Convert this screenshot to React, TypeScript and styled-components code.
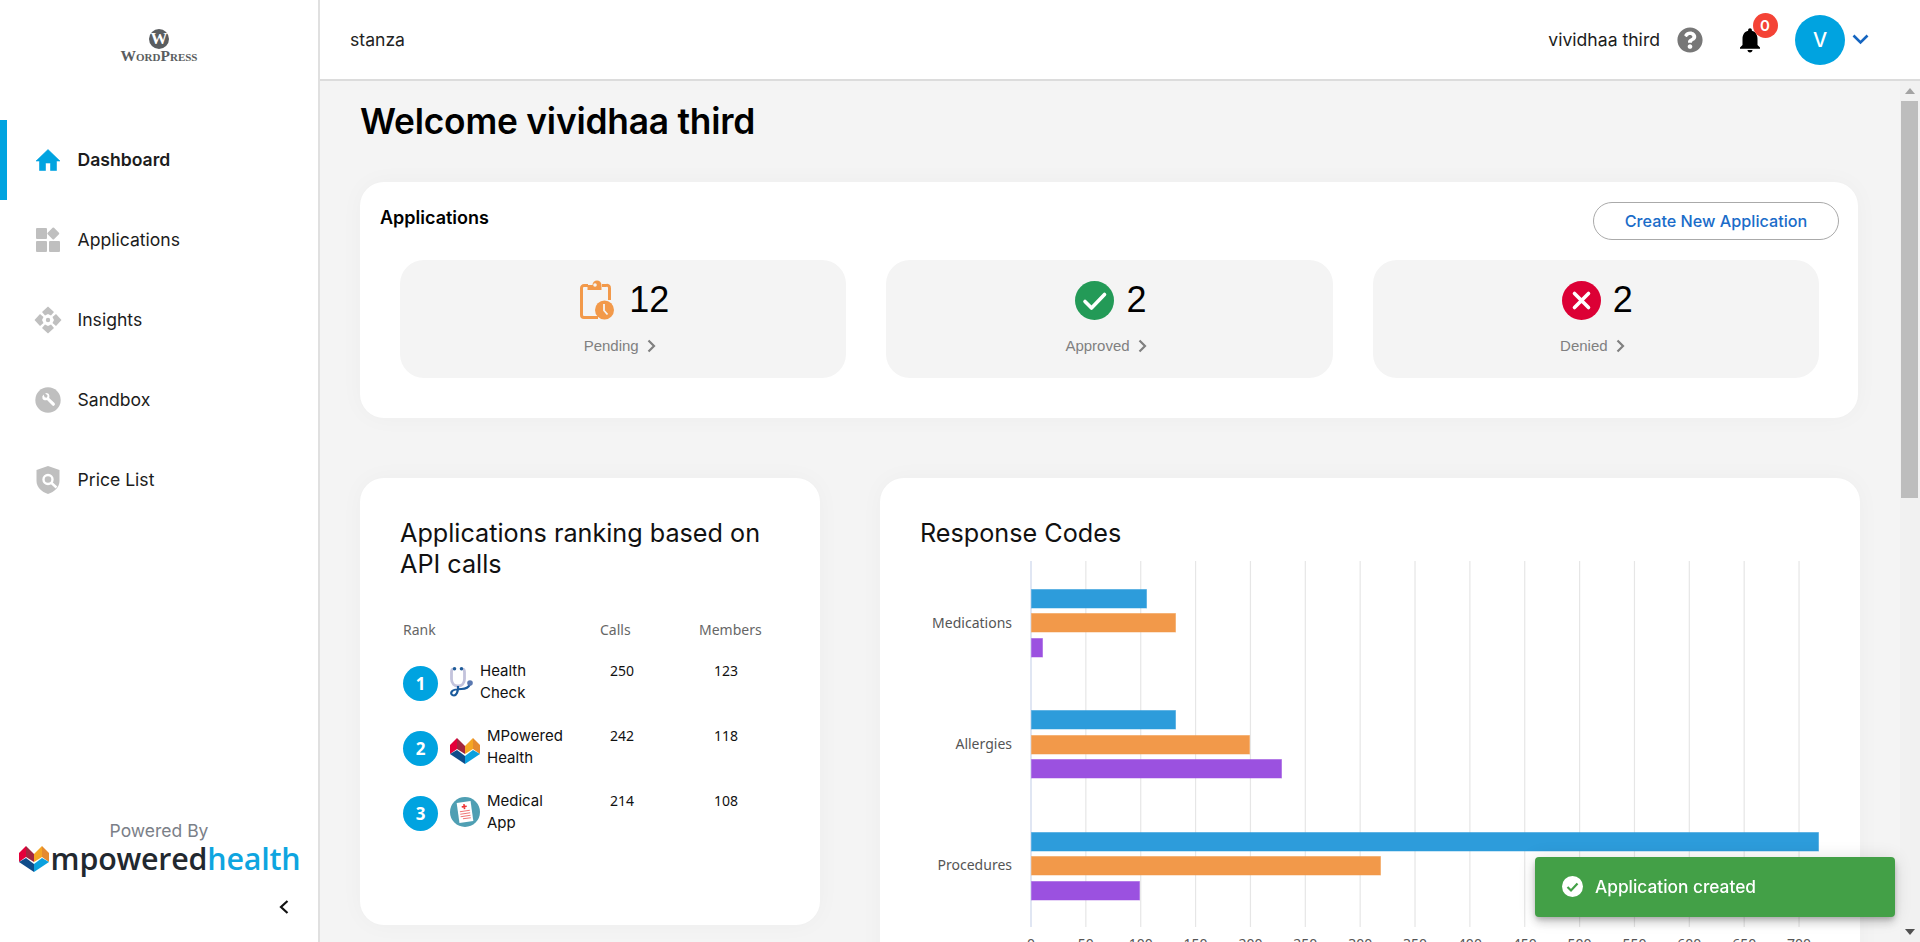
import React from "react";
import styled, { createGlobalStyle } from "styled-components";
import { FaQuestionCircle } from "react-icons/fa";

const Global = createGlobalStyle`
  html, body { margin: 0; padding: 0; height: 100%; overflow: hidden; background: #fff; }
  body { font-family: Inter, "Liberation Sans", sans-serif; color: #1a1a1a; }
  * { box-sizing: border-box; }
`;

const Shell = styled.div`display: flex; height: 100vh; width: 100vw;`;
const Sidebar = styled.aside`
  width: 320px; flex: none; height: 100%; display: flex; flex-direction: column;
  border-right: 2px solid #e0e0e0; background: #fff;
`;
const LogoBox = styled.div`
  height: 120px; display: flex; flex-direction: column; align-items: center; padding-top: 29px; color: #555;
`;
const WpMark = styled.div`
  width: 20px; height: 20px; border-radius: 50%; background: #5a5d60; color: #fff; display: flex;
  align-items: center; justify-content: center; font: bold 17px "Liberation Serif", serif;
`;
const WpWord = styled.div`
  font: bold 15.5px/14px "Liberation Serif", serif; font-variant: small-caps; color: #5a5d60;
`;
const Nav = styled.nav`display: flex; flex-direction: column; flex: 1;`;
const NavItem = styled.div<{ $active?: boolean }>`
  height: 80px; display: flex; align-items: center; gap: 17.5px; padding-left: 36px;
  font-size: 17.6px; font-weight: ${(p) => (p.$active ? 600 : 400)}; color: #1c1c1c;
  box-shadow: ${(p) => (p.$active ? "inset 7px 0 0 #00a3e0" : "none")};
`;
const NavLabel = styled.span`margin-bottom: 2px;`;
const NavIcon = styled.svg`width: 24px; height: 28px; flex: none; overflow: visible;`;
const Foot = styled.div`display: flex; flex-direction: column; align-items: center; padding-bottom: 26px;`;
const Powered = styled.div`font-size: 17.5px; line-height: 20px; color: #7b8088; margin: 0 0 3px; position: relative; top: 1px;`;
const Brand = styled.div`display: flex; align-items: center; height: 32px; margin-left: 1px; gap: 2px;`;
const BrandWord = styled.span<{ $c: string }>`
  font: 600 30.4px/30px "Open Sans", sans-serif; color: ${(p) => p.$c}; letter-spacing: -0.2px;
`;
const Collapse = styled.svg`width: 14px; height: 18px; margin: 23px 0 0 250px;`;

const Right = styled.div`flex: 1; min-width: 0; display: flex; flex-direction: column;`;
const Header = styled.header`
  height: 81px; flex: none; display: flex; align-items: center; padding: 0 51px 0 30px; background: #fff;
  border-bottom: 2px solid #dcdcdc; font-size: 17.6px;
`;
const Tenant = styled.div`flex: 1; color: #222;`;
const UserName = styled.div`color: #1c1c1c; margin-right: 17px;`;
const HelpWrap = styled.div`display: flex; color: #777; margin-right: 32px;`;
const BellWrap = styled.div`position: relative; width: 30px; height: 30px; margin-right: 30px;`;
const Badge = styled.span`
  position: absolute; left: 17.5px; top: -12px; width: 25px; height: 25px; border-radius: 50%; background: #f44336; color: #fff;
  font-size: 15px; font-weight: 600; display: flex; align-items: center; justify-content: center;
`;
const Avatar = styled.div`
  width: 50px; height: 50px; border-radius: 50%; background: #00a3e0; color: #fff; font-size: 20px; font-weight: 500;
  display: flex; align-items: center; justify-content: center; margin-right: 7px;
`;

const Body = styled.div`flex: 1; min-height: 0; display: flex;`;
const Main = styled.main`flex: 1; min-width: 0; overflow: hidden; background: #f4f4f4;`;
const ScrollBar = styled.div`width: 20px; flex: none; background: #f1f1f1; display: flex; flex-direction: column;`;
const ScrollArrow = styled.div`height: 20px; flex: none; display: flex; align-items: center; justify-content: center;`;
const ScrollThumb = styled.div`width: 17px; height: 397px; margin-left: 1px; background: #bdbdbd;`;
const ScrollRest = styled.div`flex: 1;`;

const Content = styled.div`padding: 19px 42px 60px 40px;`;
const Welcome = styled.h1`margin: 0 0 38px; font-size: 35.3px; line-height: 44px; font-weight: 600; color: #000; letter-spacing: -0.2px;`;
const Panel = styled.section`
  background: #fff; border-radius: 24px; box-shadow: 0 0 24px rgba(0,0,0,.03);
`;
const AppsPanel = styled(Panel)`padding: 20px 19px 40px 20px; margin-bottom: 60px;`;
const AppsHead = styled.div`display: flex; justify-content: space-between; align-items: flex-start; height: 38px; margin-bottom: 20px;`;
const AppsTitle = styled.h2`margin: 0; font-size: 18px; line-height: 32px; font-weight: 600; color: #000;`;
const CreateBtn = styled.button`
  width: 246px; height: 38px; border-radius: 19px; border: 1px solid #aaa; background: #fff; color: #1a6cc9;
  font: 500 16.2px Inter, sans-serif; padding: 0;
`;
const Stats = styled.div`display: grid; grid-template-columns: repeat(3, 1fr); gap: 40px; padding: 0 20px;`;
const Stat = styled.div`
  height: 118px; border-radius: 24px; background: #f4f4f4; display: flex; flex-direction: column; align-items: center; padding-top: 20px;
`;
const StatTop = styled.div<{ $gap: number }>`display: flex; align-items: center; gap: ${(p) => p.$gap}px; height: 40px; padding-left: 3px;`;
const StatNum = styled.span`font: 36px/42px "Liberation Sans", sans-serif; color: #000;`;
const StatLabel = styled.div`
  margin-top: 16px; padding-right: 7px; display: flex; align-items: center; gap: 8px; font: 15px/20px "Liberation Sans", sans-serif; color: #808080;
`;
const Row2 = styled.div`display: grid; grid-template-columns: 460px 1fr; gap: 60px; align-items: start;`;
const RankPanel = styled(Panel)`padding: 40px 30px 70px 40px;`;
const CardTitle = styled.h3`margin: 0; font-size: 25.2px; line-height: 31px; font-weight: 400; color: #111;`;
const RankGrid = styled.div`
  display: grid; grid-template-columns: 197px 99px 1fr; padding-left: 3px; margin-top: 40px;
  font-family: "Noto Sans", sans-serif; font-size: 14px;
`;
const HeadCell = styled.div`height: 40px; line-height: 20px; color: #666;`;
const RankCell = styled.div`height: 65px; display: flex; align-items: flex-start;`;
const RankNum = styled.div`
  width: 35px; height: 35px; border-radius: 50%; background: #00a3e0; color: #fff; font-weight: 700; font-size: 17px; flex: none;
  display: flex; align-items: center; justify-content: center; margin-top: 6px; margin-right: 12px;
`;
const AppIcon = styled.svg`flex: none; margin-top: 7px; margin-right: 7px;`;
const HeartBox = styled.div`flex: none; width: 30px; height: 26px; margin-top: 13px; margin-right: 7px;`;
const AppName = styled.div`width: 80px; font: 15px/22px Inter, sans-serif; color: #111;`;
const NumCell = styled.div<{ $pad: number }>`height: 65px; line-height: 22px; color: #111; padding-left: ${(p) => p.$pad}px;`;
const ChartPanel = styled(Panel)`padding: 40px 40px 120px; min-height: 900px;`;
const Chart = styled.svg`display: block; width: 900px; height: 420px; margin-top: 1px; overflow: visible; font-family: "Noto Sans", sans-serif;`;
const Toast = styled.div`
  position: fixed; left: 1535px; top: 857px; width: 360px; height: 60px; border-radius: 4px; background: #43a047; color: #fff;
  display: flex; align-items: center; gap: 12px; padding: 0 0 1px 27px; font-size: 17.3px; font-weight: 500;
  box-shadow: 0 3px 5px -1px rgba(0,0,0,.2), 0 6px 10px 0 rgba(0,0,0,.14), 0 1px 18px 0 rgba(0,0,0,.12);
`;

const Heart = ({ w = 30 }: { w?: number }) => (
  <svg width={w} height={(w * 26) / 30} viewBox="0 0 30 26" style={{ flex: "none", display: "block" }}>
    <polygon points="0,7 7,0 7,11 0,16" fill="#e4003a" />
    <polygon points="7,0 15,8 15,16 7,11" fill="#a3263f" />
    <polygon points="15,8 23,0 23,11 15,16" fill="#f5a623" />
    <polygon points="23,0 30,7 30,16 23,11" fill="#e58a2f" />
    <polygon points="0,16 7,12 15,18 15,26" fill="#0f4c8a" />
    <polygon points="30,16 23,12 15,18 15,26" fill="#0aa0de" />
  </svg>
);

const Chev = ({ c = "#808080" }: { c?: string }) => (
  <svg width="9" height="14" viewBox="0 0 9 14"><path d="M1.5 1.5L7 7l-5.5 5.5" fill="none" stroke={c} strokeWidth="2.2" /></svg>
);

const BLUE = "#2d9cdb", ORANGE = "#f2994a", PURPLE = "#9b51e0";
const cats = [
  { name: "Medications", ly: 628, bars: [[589, 1147, BLUE], [613, 1176, ORANGE], [638, 1043, PURPLE]] },
  { name: "Allergies", ly: 749, bars: [[710, 1176, BLUE], [735, 1250, ORANGE], [759, 1282, PURPLE]] },
  { name: "Procedures", ly: 870, bars: [[832, 1819, BLUE], [856, 1381, ORANGE], [881, 1140, PURPLE]] },
] as { name: string; ly: number; bars: [number, number, string][] }[];
const ticks = Array.from({ length: 15 }, (_, i) => i);
const tx = (i: number) => 1031 + i * 54.86;

const rows = [
  { n: 1, name: "Health Check", calls: 250, members: 123, icon: "steth" },
  { n: 2, name: "MPowered Health", calls: 242, members: 118, icon: "heart" },
  { n: 3, name: "Medical App", calls: 214, members: 108, icon: "med" },
];

const RowIcon = ({ kind }: { kind: string }) => {
  if (kind === "steth")
    return (
      <AppIcon width="23" height="30" viewBox="0 0 23 30" fill="none">
        <path d="M3 2C1.800 2.400 1.500 3.200 1.500 5v7c0 4.500 3 7 6.500 7s6.500-2.500 6.500-7V5c0-1.800-.3-2.600-1.500-3" stroke="#c3c3dc" strokeWidth="2.800" />
        <circle cx="4.500" cy="1.800" r="1.800" fill="#1f5c99" /><circle cx="11.500" cy="1.800" r="1.800" fill="#1f5c99" />
        <path d="M8 19v2c0 3.500-1.500 7.500-4 7.500S.8 26.500 1.500 25c1-2.200 5-3 10-3 4.500 0 7-1.200 8.500-5" stroke="#1a5a9c" strokeWidth="2.200" />
        <circle cx="20" cy="16" r="2.800" fill="#5a78b0" />
      </AppIcon>
    );
  if (kind === "heart")
    return <HeartBox><Heart /></HeartBox>;
  return (
    <AppIcon width="30" height="30" viewBox="0 0 30 30">
      <circle cx="15" cy="15" r="15" fill="#4f9fb3" />
      <g transform="rotate(-8 15 15)">
        <rect x="8" y="5" width="14" height="20" fill="#fff" />
        <path d="M15 7v5M12.500 9.500h5" stroke="#e33" strokeWidth="1.600" />
        <path d="M10 14h10M10 16.500h10M10 19h10M12 21.500h8" stroke="#ee7777" strokeWidth="1" />
      </g>
    </AppIcon>
  );
};

export default function App() {
  return (
    <Shell>
      <Global />
      <Sidebar>
        <LogoBox>
          <WpMark>W</WpMark>
          <WpWord>WordPress</WpWord>
        </LogoBox>
        <Nav>
          <NavItem $active>
            <NavIcon viewBox="0 0 24 28"><path d="M12 3.500L0 15h3.500v9.500H9.500V17h5v7.500h6V15H24z" fill="#00a3e0" strokeLinejoin="round" stroke="#00a3e0" strokeWidth="0.600" /></NavIcon>
            <NavLabel>Dashboard</NavLabel>
          </NavItem>
          <NavItem>
            <NavIcon viewBox="0 0 24 28" fill="#bfbfbf">
              <rect x="0" y="2" width="11" height="11" rx="1" />
              <rect x="12.800" y="3" width="9" height="9" rx="1" transform="rotate(45 17.300 7.500)" />
              <rect x="0" y="15" width="11" height="11" rx="1" />
              <rect x="13" y="15" width="11" height="11" rx="1" />
            </NavIcon>
            <NavLabel>Applications</NavLabel>
          </NavItem>
          <NavItem>
            <NavIcon viewBox="0 0 24 28" fill="#bfbfbf">
              <path d="M12 .5l6 5.500-3 3.500-3-1.500-3 1.500-3-3.500zM12 27.500l6-5.500-3-3.500-3 1.500-3-1.500-3 3.500zM-1.500 14L4 8l3.500 3-1.500 3 1.500 3L4 20zM25.500 14L20 8l-3.500 3 1.500 3-1.500 3L20 20z" />
              <circle cx="12" cy="14" r="2.200" />
            </NavIcon>
            <NavLabel>Insights</NavLabel>
          </NavItem>
          <NavItem>
            <NavIcon viewBox="0 0 24 28">
              <circle cx="12" cy="14" r="12.700" fill="#bfbfbf" />
              <path d="M7.500 8.500a4 4 0 0 0-1 4.200l0 0c1 1.600 3 2 4.500 1.300l5.200 5.300a1.500 1.500 0 0 0 2.300-2.200l-5.300-5.200c.5-1.600.2-3.300-1.100-4.300-.8-.6-2-.9-3-.6l2.600 2.700-1 2-2-.5z" fill="#fff" />
            </NavIcon>
            <NavLabel>Sandbox</NavLabel>
          </NavItem>
          <NavItem>
            <NavIcon viewBox="0 0 24 28">
              <path d="M12 0l11.500 4v11c0 6-5 11-11.500 13C5.500 26 .5 21 .5 15V4z" fill="#bfbfbf" />
              <circle cx="12" cy="13.500" r="4.500" fill="none" stroke="#fff" strokeWidth="2.400" />
              <path d="M15.500 17l5 4.500" stroke="#fff" strokeWidth="2.400" />
            </NavIcon>
            <NavLabel>Price List</NavLabel>
          </NavItem>
        </Nav>
        <Foot>
          <Powered>Powered By</Powered>
          <Brand>
            <Heart />
            <span>
              <BrandWord $c="#22282f">mpowered</BrandWord>
              <BrandWord $c="#0ea5e0">health</BrandWord>
            </span>
          </Brand>
          <Collapse viewBox="0 0 14 18"><path d="M10.500 3L4 9l6.500 6" fill="none" stroke="#111" strokeWidth="2.200" /></Collapse>
        </Foot>
      </Sidebar>
      <Right>
        <Header>
          <Tenant>stanza</Tenant>
          <UserName>vividhaa third</UserName>
          <HelpWrap><FaQuestionCircle size={26} /></HelpWrap>
          <BellWrap>
            <svg width="30" height="30" viewBox="0 0 24 24"><path d="M12 22c1.100 0 2-.9 2-2h-4c0 1.100.9 2 2 2zm6-6v-5c0-3.070-1.630-5.640-4.500-6.320V4c0-.83-.67-1.500-1.500-1.500s-1.500.67-1.500 1.500v.68C7.640 5.360 6 7.920 6 11v5l-2 2v1h16v-1l-2-2z" fill="#000" /></svg>
            <Badge>0</Badge>
          </BellWrap>
          <Avatar>V</Avatar>
          <svg width="17" height="11" viewBox="0 0 17 11"><path d="M1.500 1.500L8.500 8.500l7-7" fill="none" stroke="#1565c0" strokeWidth="2.600" /></svg>
        </Header>
        <Body>
          <Main>
            <Content>
              <Welcome>Welcome vividhaa third</Welcome>
              <AppsPanel>
                <AppsHead>
                  <AppsTitle>Applications</AppsTitle>
                  <CreateBtn>Create New Application</CreateBtn>
                </AppsHead>
                <Stats>
                  <Stat>
                    <StatTop $gap={15}>
                      <svg width="34" height="40" viewBox="0 0 34 40" fill="none">
                        <path d="M8 5.500H4a2.500 2.500 0 0 0-2.500 2.500v27A2.500 2.500 0 0 0 4 37.500h14M22 5.500h4A2.500 2.500 0 0 1 29.500 8v12" stroke="#f2994a" strokeWidth="3" />
                        <path d="M7.500 10V5h5a4.500 4.500 0 0 1 9 0v5z" fill="#f2994a" />
                        <circle cx="15" cy="5" r="1.800" fill="#f4f4f4" />
                        <circle cx="24.500" cy="30" r="9.500" fill="#f2994a" />
                        <path d="M24 24v6.500l3.500 4" stroke="#f4f4f4" strokeWidth="1.800" />
                      </svg>
                      <StatNum>12</StatNum>
                    </StatTop>
                    <StatLabel>Pending <Chev /></StatLabel>
                  </Stat>
                  <Stat>
                    <StatTop $gap={12}>
                      <svg width="39" height="39" viewBox="0 0 39 39"><circle cx="19.500" cy="19.500" r="19.500" fill="#239a57" /><path d="M10 20.500l6.500 6.500 13-13.500" fill="none" stroke="#fff" strokeWidth="3.600" strokeLinecap="round" strokeLinejoin="round" /></svg>
                      <StatNum>2</StatNum>
                    </StatTop>
                    <StatLabel>Approved <Chev /></StatLabel>
                  </Stat>
                  <Stat>
                    <StatTop $gap={12}>
                      <svg width="39" height="39" viewBox="0 0 39 39"><circle cx="19.500" cy="19.500" r="19.500" fill="#dc0035" /><path d="M12.500 12.500l14 14m0-14l-14 14" fill="none" stroke="#fff" strokeWidth="3.600" strokeLinecap="round" /></svg>
                      <StatNum>2</StatNum>
                    </StatTop>
                    <StatLabel>Denied <Chev /></StatLabel>
                  </Stat>
                </Stats>
              </AppsPanel>
              <Row2>
                <RankPanel>
                  <CardTitle>Applications ranking based on API calls</CardTitle>
                  <RankGrid>
                    <HeadCell>Rank</HeadCell>
                    <HeadCell>Calls</HeadCell>
                    <HeadCell>Members</HeadCell>
                    {rows.map((r) => (
                      <React.Fragment key={r.n}>
                        <RankCell>
                          <RankNum>{r.n}</RankNum>
                          <RowIcon kind={r.icon} />
                          <AppName>{r.name}</AppName>
                        </RankCell>
                        <NumCell $pad={10}>{r.calls}</NumCell>
                        <NumCell $pad={15}>{r.members}</NumCell>
                      </React.Fragment>
                    ))}
                  </RankGrid>
                </RankPanel>
                <ChartPanel>
                  <CardTitle>Response Codes</CardTitle>
                  <Chart viewBox="920 550 900 420">
                    {ticks.map((i) => (
                      <line key={i} x1={tx(i)} x2={tx(i)} y1={561} y2={927} stroke={i === 0 ? "#ccd6eb" : "#e6e6e6"} strokeWidth={1.2} />
                    ))}
                    {cats.map((c) => (
                      <g key={c.name}>
                        <text x={1012} y={c.ly} textAnchor="end" fontSize="14" fill="#555">{c.name}</text>
                        {c.bars.map(([y, x2, col]) => (
                          <rect key={y} x={1031.5} y={y + 0.5} width={x2 - 1032} height={18.5} fill={col} stroke={col} strokeOpacity={0.5} />
                        ))}
                      </g>
                    ))}
                    {ticks.map((i) => (
                      <text key={i} x={tx(i)} y={949} textAnchor="middle" fontSize="14" fill="#555">{i * 50}</text>
                    ))}
                  </Chart>
                </ChartPanel>
              </Row2>
            </Content>
          </Main>
          <ScrollBar>
            <ScrollArrow><svg width="10" height="6" viewBox="0 0 10 6"><path d="M5 0l5 6H0z" fill="#a3a3a3" /></svg></ScrollArrow>
            <ScrollThumb />
            <ScrollRest />
            <ScrollArrow><svg width="10" height="6" viewBox="0 0 10 6"><path d="M5 6l5-6H0z" fill="#505050" /></svg></ScrollArrow>
          </ScrollBar>
        </Body>
      </Right>
      <Toast>
        <svg width="21" height="21" viewBox="0 0 21 21"><circle cx="10.500" cy="10.500" r="10.500" fill="#fff" /><path d="M5.500 11l3.500 3.500 6.500-7" fill="none" stroke="#43a047" strokeWidth="2.200" /></svg>
        Application created
      </Toast>
    </Shell>
  );
}
